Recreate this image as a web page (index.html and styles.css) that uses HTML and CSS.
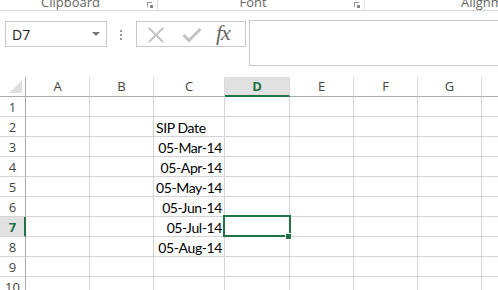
FILE: index.html
```html
<!DOCTYPE html>
<html>
<head>
<meta charset="utf-8">
<link rel="stylesheet" href="styles.css">
</head>
<body>
<div class="app">
  <div class="ribbon">
    <div class="group g-clip"><span class="glabel">Clipboard</span><span class="launch"></span></div>
    <div class="group g-font"><span class="glabel">Font</span><span class="launch"></span></div>
    <div class="group g-align"><span class="glabel">Alignment</span></div>
  </div>
  <div class="fbar">
    <div class="namebox"><span class="nbtext">D7</span><span class="nbarrow"></span></div>
    <div class="dots"><i></i><i></i><i></i></div>
    <div class="fbtns">
      <svg class="ic-x" width="18" height="16" viewBox="0 0 18 16"><path d="M2 1 L16 15 M16 1 L2 15" stroke="#c3c3c3" stroke-width="1.8" fill="none"/></svg>
      <svg class="ic-ok" width="20" height="16" viewBox="0 0 20 16"><path d="M1.5 8 L7 13.5 L18.5 2" stroke="#c3c3c3" stroke-width="3" fill="none"/></svg>
      <span class="fx">fx</span>
    </div>
    <div class="finput"></div>
  </div>
  <div class="sheet">
    <div class="hc corner"><span class="tri"></span></div>
    <div class="hc">A</div><div class="hc">B</div><div class="hc">C</div><div class="hc sel">D</div><div class="hc">E</div><div class="hc">F</div><div class="hc">G</div><div class="hc last"></div>

    <div class="rh">1</div><div class="c"></div><div class="c"></div><div class="c"></div><div class="c"></div><div class="c"></div><div class="c"></div><div class="c"></div><div class="c last"></div>
    <div class="rh">2</div><div class="c"></div><div class="c"></div><div class="c">SIP Date</div><div class="c"></div><div class="c"></div><div class="c"></div><div class="c"></div><div class="c last"></div>
    <div class="rh">3</div><div class="c"></div><div class="c"></div><div class="c num">05-Mar-14</div><div class="c"></div><div class="c"></div><div class="c"></div><div class="c"></div><div class="c last"></div>
    <div class="rh">4</div><div class="c"></div><div class="c"></div><div class="c num">05-Apr-14</div><div class="c"></div><div class="c"></div><div class="c"></div><div class="c"></div><div class="c last"></div>
    <div class="rh">5</div><div class="c"></div><div class="c"></div><div class="c num">05-May-14</div><div class="c"></div><div class="c"></div><div class="c"></div><div class="c"></div><div class="c last"></div>
    <div class="rh">6</div><div class="c"></div><div class="c"></div><div class="c num">05-Jun-14</div><div class="c"></div><div class="c"></div><div class="c"></div><div class="c"></div><div class="c last"></div>
    <div class="rh sel">7</div><div class="c"></div><div class="c"></div><div class="c num">05-Jul-14</div><div class="c active"><span class="selbox"></span><span class="handle"></span></div><div class="c"></div><div class="c"></div><div class="c"></div><div class="c last"></div>
    <div class="rh">8</div><div class="c"></div><div class="c"></div><div class="c num">05-Aug-14</div><div class="c"></div><div class="c"></div><div class="c"></div><div class="c"></div><div class="c last"></div>
    <div class="rh">9</div><div class="c"></div><div class="c"></div><div class="c"></div><div class="c"></div><div class="c"></div><div class="c"></div><div class="c"></div><div class="c last"></div>
    <div class="rh">10</div><div class="c"></div><div class="c"></div><div class="c"></div><div class="c"></div><div class="c"></div><div class="c"></div><div class="c"></div><div class="c last"></div>
  </div>
</div>
</body>
</html>
```
FILE: styles.css
```css
html, body {
  margin: 0;
  padding: 0;
  background: #fff;
  overflow: hidden;
}
.app {
  width: 498px;
  height: 290px;
  overflow: hidden;
  font-family: "Open Sans", "Noto Sans", sans-serif;
}
.ribbon {
  height: 10px;
  border-bottom: 1px solid #d5d5d5;
  display: flex;
  overflow: hidden;
  position: relative;
}
.group {
  position: relative;
  height: 10px;
  border-right: 1px solid #e1e1e1;
  box-sizing: border-box;
  display: flex;
  justify-content: center;
  flex-shrink: 0;
}
.g-clip { width: 158px; padding-right: 16px; }
.g-font { width: 207px; padding-right: 16px; }
.g-align {
  flex: 1 1 0;
  min-width: 0;
  border-right: none;
  justify-content: flex-start;
  padding-left: 96px;
  overflow: hidden;
}
.glabel {
  font-size: 13px;
  line-height: 13px;
  margin-top: -4px;
  color: #666;
  white-space: nowrap;
}
.launch {
  position: absolute;
  right: 5px;
  top: 2px;
  width: 5px;
  height: 5px;
  border-left: 1px solid #999;
  border-top: 1px solid #999;
  box-sizing: border-box;
}
.launch::after {
  content: "";
  position: absolute;
  right: -1px;
  bottom: -1px;
  width: 3px;
  height: 3px;
  background: #888;
}
.fbar {
  height: 66px;
  display: flex;
  align-items: flex-start;
  padding-top: 10px;
  box-sizing: border-box;
}
.namebox {
  margin-left: 5px;
  width: 102px;
  height: 26px;
  border: 1px solid #c6c6c6;
  box-sizing: border-box;
  display: flex;
  align-items: center;
  justify-content: space-between;
  padding: 0 6px 0 6px;
  flex-shrink: 0;
}
.nbtext {
  font-size: 14px;
  color: #222;
  font-family: "Open Sans", sans-serif;
  margin-top: 1px;
}
.nbarrow {
  width: 0;
  height: 0;
  border-left: 4px solid transparent;
  border-right: 4px solid transparent;
  border-top: 4px solid #777;
}
.dots {
  margin-left: 13px;
  margin-top: 9px;
  display: flex;
  flex-direction: column;
  gap: 2px;
}
.dots i {
  display: block;
  width: 2px;
  height: 2px;
  background: #9a9a9a;
}
.fbtns {
  margin-left: 14px;
  width: 110px;
  height: 26px;
  border: 1px solid #c6c6c6;
  box-sizing: border-box;
  display: flex;
  align-items: center;
  padding-left: 10px;
  flex-shrink: 0;
}
.ic-x { margin-top: 1px; }
.ic-ok { margin-left: 17px; margin-top: 1px; }
.fx {
  margin-left: 14px;
  font-family: "Liberation Serif", "DejaVu Serif", serif;
  font-style: italic;
  font-size: 22px;
  color: #666;
  line-height: 22px;
  margin-top: -3px;
  letter-spacing: -1px;
}
.finput {
  margin-left: 3px;
  flex: 1;
  height: 46px;
  margin-top: -1px;
  border: 1px solid #c6c6c6;
  border-right: none;
  box-sizing: border-box;
}
.sheet {
  display: grid;
  grid-template-columns: 26px 64px 64px 71px 65px 64px 64px 64px 1fr;
  grid-auto-rows: 20px;
}
.hc {
  box-sizing: border-box;
  border-right: 1px solid #dadada;
  border-bottom: 1px solid #ababab;
  font-size: 13px;
  color: #444;
  text-align: center;
  line-height: 19px;
}
.hc.last { border-right: none; }
.hc.corner {
  position: relative;
  border-right: 1px solid #ababab;
}
.tri {
  position: absolute;
  right: 3px;
  bottom: 3px;
  width: 0;
  height: 0;
  border-left: 13px solid transparent;
  border-bottom: 13px solid #dfdfdf;
}
.hc.sel {
  background: #e1e1e1;
  border-bottom: 2px solid #217346;
  color: #217346;
  font-weight: 700;
  line-height: 18px;
}
.rh {
  box-sizing: border-box;
  border-right: 1px solid #ababab;
  border-bottom: 1px solid #d4d4d4;
  font-size: 13px;
  color: #444;
  text-align: center;
  line-height: 20px;
}
.rh.sel {
  background: #e1e1e1;
  border-right: 2px solid #217346;
  color: #217346;
  font-weight: 700;
  padding-left: 1px;
}
.c {
  box-sizing: border-box;
  border-right: 1px solid #d4d4d4;
  border-bottom: 1px solid #d4d4d4;
  font-family: "Lato", "Open Sans", sans-serif;
  font-size: 14px;
  letter-spacing: -0.4px;
  color: #000;
  line-height: 19px;
  padding: 1px 2px 0 2px;
  white-space: nowrap;
  overflow: visible;
}
.c.last { border-right: none; }
.c.num { text-align: right; padding-right: 2px; }
.c.active { position: relative; }
.selbox {
  position: absolute;
  left: -2px;
  top: -2px;
  width: 68px;
  height: 22px;
  border: 2px solid #217346;
  box-sizing: border-box;
}
.handle {
  position: absolute;
  left: 60px;
  top: 16px;
  width: 5px;
  height: 5px;
  background: #217346;
  border: 1px solid #fff;
}
```
